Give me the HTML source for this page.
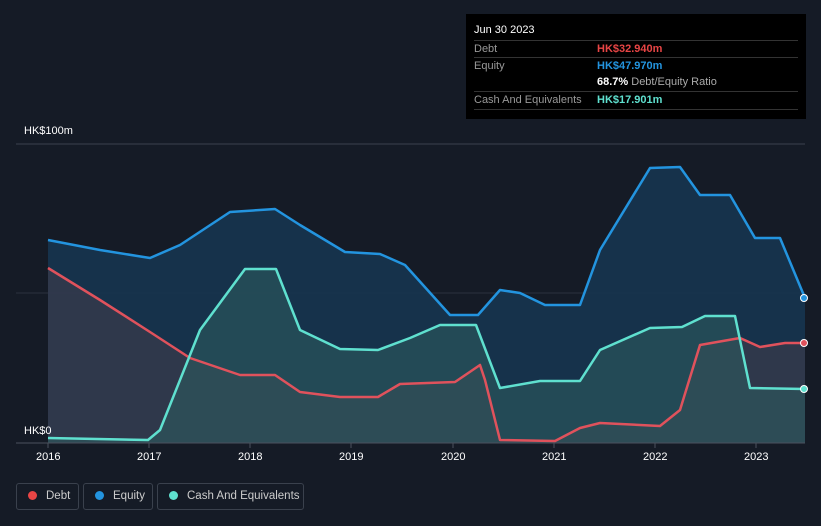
<!DOCTYPE html><html><head><style>
body{margin:0;background:#151b26;width:821px;height:526px;overflow:hidden;font-family:"Liberation Sans",sans-serif;position:relative}
.t{position:absolute;color:#fff;font-size:11px}
.tip{position:absolute;left:466px;top:14px;width:340px;height:105px;background:#000}
.row{position:absolute;left:8px;width:324px;border-top:1px solid #333;font-size:11px;color:#999;height:17px;line-height:17px}
.lg{position:absolute;top:483px;height:27px;border:1px solid #3a414d;border-radius:3px;color:#ccc;font-size:11.5px;line-height:25px;box-sizing:border-box;white-space:nowrap;overflow:hidden}
.dot{display:inline-block;width:9px;height:9px;border-radius:50%;margin:0 9px 0 11px;vertical-align:-1px}
</style></head><body>
<svg width="821" height="526" style="position:absolute;left:0;top:0">
<line x1="16" y1="144" x2="805" y2="144" stroke="#3a414d"/>
<line x1="16" y1="293" x2="805" y2="293" stroke="#2a313d"/>
<polygon fill="#163550" fill-opacity="0.9" points="48,443 48,240 100,250 150,258 180,245 230,212 275,209 300,225 345,252 380,254 405,265 450,315 478,315 500,290 520,293 545,305 580,305 600,250 650,168 680,167 700,195 730,195 755,238 780,238 805,298 805,443"/>
<polygon fill="#3a3a4c" fill-opacity="0.7" points="48,443 48,268 100,300 150,332 190,358 240,375 275,375 300,392 340,397 378,397 400,384 455,382 480,365 485,380 500,440 555,441 580,428 600,423 660,426 680,410 700,345 740,338 760,347 785,343 805,343 805,443"/>
<polygon fill="#2d5a5e" fill-opacity="0.6" points="48,443 48,438 148,440 160,430 200,330 245,269 276,269 300,330 340,349 378,350 410,338 440,325 476,325 500,388 540,381 580,381 600,350 650,328 682,327 705,316 735,316 750,388 805,389 805,443"/>
<polyline fill="none" stroke="#2394df" stroke-width="2.5" stroke-linejoin="round" points="48,240 100,250 150,258 180,245 230,212 275,209 300,225 345,252 380,254 405,265 450,315 478,315 500,290 520,293 545,305 580,305 600,250 650,168 680,167 700,195 730,195 755,238 780,238 805,298"/>
<polyline fill="none" stroke="#e0525c" stroke-width="2.5" stroke-linejoin="round" points="48,268 100,300 150,332 190,358 240,375 275,375 300,392 340,397 378,397 400,384 455,382 480,365 485,380 500,440 555,441 580,428 600,423 660,426 680,410 700,345 740,338 760,347 785,343 805,343"/>
<polyline fill="none" stroke="#5fe0cf" stroke-width="2.5" stroke-linejoin="round" points="48,438 148,440 160,430 200,330 245,269 276,269 300,330 340,349 378,350 410,338 440,325 476,325 500,388 540,381 580,381 600,350 650,328 682,327 705,316 735,316 750,388 805,389"/>
<line x1="16" y1="443" x2="805" y2="443" stroke="#4a515d"/>
<g stroke="#4a515d"><line x1="48" y1="443" x2="48" y2="448"/><line x1="149" y1="443" x2="149" y2="448"/><line x1="250" y1="443" x2="250" y2="448"/><line x1="351" y1="443" x2="351" y2="448"/><line x1="453" y1="443" x2="453" y2="448"/><line x1="554" y1="443" x2="554" y2="448"/><line x1="655" y1="443" x2="655" y2="448"/><line x1="756" y1="443" x2="756" y2="448"/></g>
<circle cx="804" cy="298" r="3.5" fill="#2394df" stroke="#fff"/>
<circle cx="804" cy="343" r="3.5" fill="#e0525c" stroke="#fff"/>
<circle cx="804" cy="389" r="3.5" fill="#5fe0cf" stroke="#fff"/>
</svg>
<div class="t" style="left:24px;top:125px">HK$100m</div>
<div class="t" style="left:24px;top:425px">HK$0</div>
<div class="t" style="left:36px;top:451px">2016</div><div class="t" style="left:137px;top:451px">2017</div><div class="t" style="left:238px;top:451px">2018</div><div class="t" style="left:339px;top:451px">2019</div><div class="t" style="left:441px;top:451px">2020</div><div class="t" style="left:542px;top:451px">2021</div><div class="t" style="left:643px;top:451px">2022</div><div class="t" style="left:744px;top:451px">2023</div>
<div class="tip">
<div style="position:absolute;left:8px;top:10px;color:#fff;font-size:11px">Jun 30 2023</div>
<div class="row" style="top:26px">Debt<span style="position:absolute;left:123px;color:#e84545;font-weight:bold">HK$32.940m</span></div>
<div class="row" style="top:43px">Equity<span style="position:absolute;left:123px;color:#2394df;font-weight:bold">HK$47.970m</span></div>
<div class="row" style="top:60px;border:0"><span style="position:absolute;left:123px;color:#fff;font-weight:bold">68.7% <span style="font-weight:normal;color:#aaa">Debt/Equity Ratio</span></span></div>
<div class="row" style="top:77px;border-bottom:1px solid #333">Cash And Equivalents<span style="position:absolute;left:123px;color:#5fe0cf;font-weight:bold">HK$17.901m</span></div>
</div>
<div class="lg" style="left:16px;width:63px"><span class="dot" style="background:#e84545"></span>Debt</div>
<div class="lg" style="left:83px;width:70px"><span class="dot" style="background:#2394df"></span>Equity</div>
<div class="lg" style="left:157px;width:147px"><span class="dot" style="background:#5fe0cf"></span>Cash And Equivalents</div>
</body></html>
